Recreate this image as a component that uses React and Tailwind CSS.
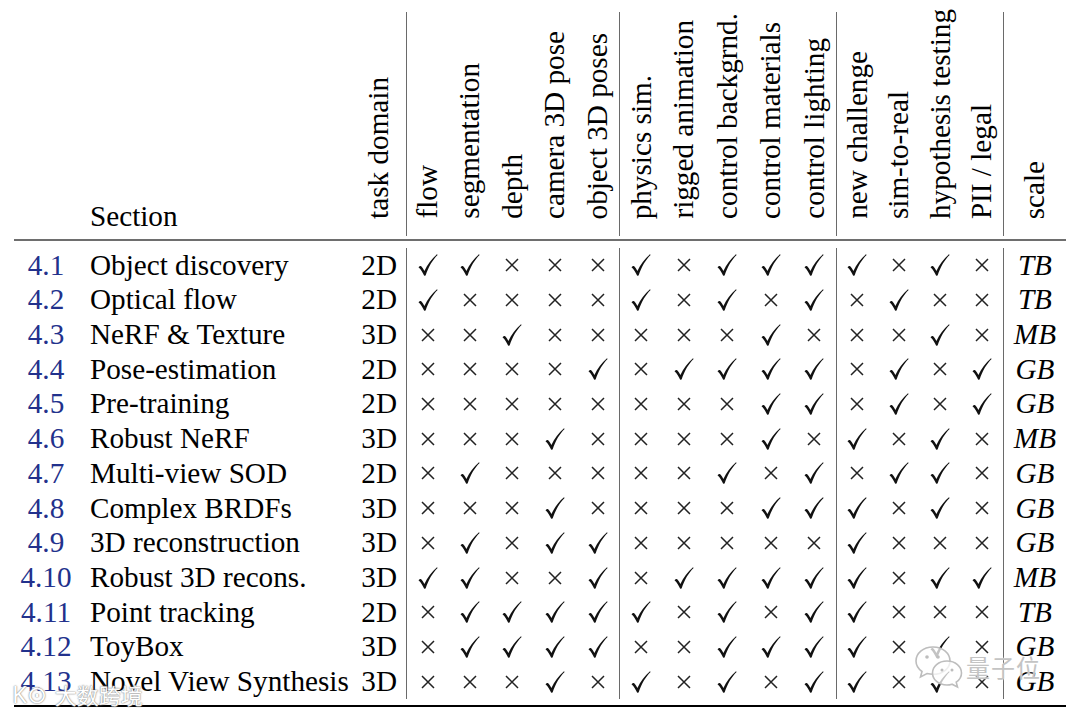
import React from "react";

const groups = [
  ["flow", "segmentation", "depth", "camera 3D pose", "object 3D poses"],
  ["physics sim.", "rigged animation", "control backgrnd.", "control materials", "control lighting"],
  ["new challenge", "sim-to-real", "hypothesis testing", "PII / legal"],
];

// c = check, x = cross, "|" separates column groups
const rows = [
  ["4.1", "Object discovery", "2D", "ccxxx|cxccc|cxcx", "TB"],
  ["4.2", "Optical flow", "2D", "cxxxx|cxcxc|xcxx", "TB"],
  ["4.3", "NeRF & Texture", "3D", "xxcxx|xxxcx|xxcx", "MB"],
  ["4.4", "Pose-estimation", "2D", "xxxxc|xcccc|xcxc", "GB"],
  ["4.5", "Pre-training", "2D", "xxxxx|xxxcc|xcxc", "GB"],
  ["4.6", "Robust NeRF", "3D", "xxxcx|xxxcx|cxcx", "MB"],
  ["4.7", "Multi-view SOD", "2D", "xcxxx|xxcxc|xccx", "GB"],
  ["4.8", "Complex BRDFs", "3D", "xxxcx|xxxcc|cxcx", "GB"],
  ["4.9", "3D reconstruction", "3D", "xcxcc|xxxxx|cxxx", "GB"],
  ["4.10", "Robust 3D recons.", "3D", "ccxxc|xcccc|cxcc", "MB"],
  ["4.11", "Point tracking", "2D", "xcccc|cxcxc|cxxx", "TB"],
  ["4.12", "ToyBox", "3D", "xcccc|xxccc|cxcx", "GB"],
  ["4.13", "Novel View Synthesis", "3D", "xxxcx|cxcxc|cxcx", "GB"],
];

const gridCols =
  "grid grid-cols-[76px_262px_54px_repeat(5,42.6px)_repeat(5,43.4px)_repeat(4,41.75px)_63px]";

function Check() {
  return (
    <svg width="20" height="22" viewBox="0 0 20 22" className="block">
      <path
        d="M0.5 13.2 C1.6 12.2 2.6 11.8 3.4 12.4 C4.6 13.4 5.5 15.2 6.4 17 C9.5 10.5 13.5 5 19 0.3 L19.6 1 C14.8 5.6 10.6 12.6 7.6 21.4 L6.2 21.8 C4.8 18.6 3 15.4 0.5 13.2 Z"
        fill="#111"
      />
    </svg>
  );
}

function Cross() {
  return (
    <svg width="14" height="14" viewBox="0 0 14 14" className="block">
      <path d="M1 1 L13 13 M13 1 L1 13" stroke="#222" strokeWidth="1.5" />
    </svg>
  );
}

function WeChatMark() {
  return (
    <svg width="50" height="46" viewBox="0 0 50 46">
      <g fill="rgba(255,255,255,0.75)" stroke="#bdbdbd" strokeWidth="1.6">
        <path d="M19 3 C9 3 2 9.5 2 17 C2 21.5 4.5 25 8 27.5 L6.5 33 L13 29.5 C15 30 17 30.3 19 30.3 C29 30.3 36 24 36 17 C36 9.5 29 3 19 3 Z" />
        <path d="M33 17 C24.5 17 18.5 22.5 18.5 29 C18.5 35.5 24.5 41 33 41 C34.8 41 36.4 40.7 38 40.2 L43.5 43 L42.2 38.2 C45.4 36 47.5 32.7 47.5 29 C47.5 22.5 41.5 17 33 17 Z" />
      </g>
      <g fill="#bdbdbd">
        <circle cx="13" cy="13" r="1.8" />
        <circle cx="24" cy="13" r="1.8" />
        <circle cx="28" cy="26" r="1.5" />
        <circle cx="38" cy="26" r="1.5" />
      </g>
    </svg>
  );
}

export default function App() {
  const flat = groups.flat();
  const groupStart = [0, 5, 10];

  return (
    <div className="relative w-[1080px] h-[716px] overflow-hidden bg-white text-black font-['Liberation_Serif','Times_New_Roman',serif] text-[29.2px] leading-none">
      <div className="ml-[14px] w-[1052px] pt-[12px]">
        {/* header */}
        <div className={`${gridCols} grid-rows-[224px] h-[224px]`}>
          <div />
          <div className="flex items-end pb-[5px]">Section</div>
          <div className="flex flex-col items-center justify-end pb-[17px]">
            <span className="[writing-mode:vertical-rl] rotate-180 whitespace-nowrap">task domain</span>
          </div>
          {flat.map((label, i) => (
            <div
              key={label}
              className={`flex flex-col items-center justify-end pb-[17px] ${
                groupStart.includes(i) ? "border-l-[1.5px] border-[#6a6a6a]" : ""
              }`}
            >
              <span className="[writing-mode:vertical-rl] rotate-180 whitespace-nowrap">{label}</span>
            </div>
          ))}
          <div className="flex flex-col items-center justify-end pb-[17px] border-l-[1.5px] border-[#6a6a6a]">
            <span className="[writing-mode:vertical-rl] rotate-180 whitespace-nowrap">scale</span>
          </div>
        </div>

        <div className="mt-[3px] h-[2px] bg-[#6e6e6e]" />

        {/* body */}
        <div className="mt-[7px]">
          {rows.map(([num, name, dom, marks, scale]) => {
            const cells = marks.replace(/\|/g, "").split("");
            return (
              <div key={num} className={`${gridCols} grid-rows-[34.7px] h-[34.7px]`}>
                <div className="flex items-center justify-center pr-[12px] text-[#22318c]">{num}</div>
                <div className="flex items-center whitespace-nowrap">{name}</div>
                <div className="flex items-center justify-end pr-[9px]">{dom}</div>
                {cells.map((m, i) => (
                  <div
                    key={i}
                    className={`flex items-center justify-center ${
                      groupStart.includes(i) ? "border-l-[1.5px] border-[#6a6a6a]" : ""
                    }`}
                  >
                    {m === "c" ? <Check /> : <Cross />}
                  </div>
                ))}
                <div className="flex items-center justify-center italic border-l-[1.5px] border-[#6a6a6a]">
                  {scale}
                </div>
              </div>
            );
          })}
        </div>

        <div className="mt-[6px] h-[2px] bg-black" />
      </div>

      {/* watermarks */}
      <div className="absolute left-[12px] top-[682px] flex items-center gap-[8px] text-white [text-shadow:0_0_1px_#777,0_0_2px_#999] opacity-95">
        <span className="font-['Noto_Sans',sans-serif] text-[24px]">K⊙</span>
        <span className="font-['Noto_Sans_CJK_SC',sans-serif] text-[22px]">大数跨境</span>
      </div>
      <div className="absolute left-[914px] top-[644px] flex items-center gap-[2px]">
        <WeChatMark />
        <span className="font-['Noto_Sans_CJK_SC',sans-serif] text-[24px] text-[#c4c4c4] [text-shadow:0_0_2px_#fff] tracking-[1px]">
          量子位
        </span>
      </div>
    </div>
  );
}
